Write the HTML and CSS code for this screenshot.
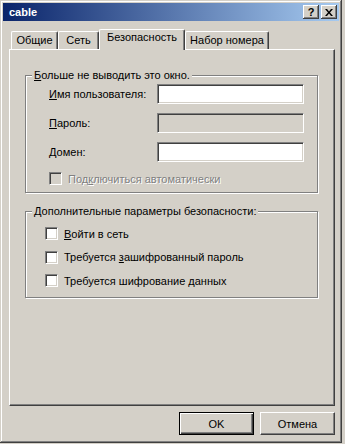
FILE: index.html
```html
<!DOCTYPE html>
<html lang="ru">
<head>
    <meta charset="UTF-8">
    <title>cable</title>
    <link rel="stylesheet" href="styles.css">
</head>
<body>
<div class="window">
    <div class="titlebar">
        <span class="title">cable</span>
        <button type="button" class="caption-btn">?</button>
        <button type="button" class="caption-btn">
            <svg width="8" height="7" viewBox="0 0 8 7"><path d="M0 0h2l2 2.5L6 0h2L5 3.5 8 7H6L4 4.5 2 7H0l3-3.5z" fill="#000"/></svg>
        </button>
    </div>

    <div class="tabs">
        <div class="tab" style="width:47px">Общие</div>
        <div class="tab" style="width:41px">Сеть</div>
        <div class="tab active" style="width:86px">Безопасность</div>
        <div class="tab" style="width:84px">Набор номера</div>
    </div>

    <div class="panel">
        <fieldset class="group">
            <legend><u>Б</u>ольше не выводить это окно.</legend>
            <div class="group-body login">
                <div class="fields">
                    <label for="user"><u>И</u>мя пользователя:</label>
                    <input type="text" id="user">
                    <label for="pass"><u>П</u>ароль:</label>
                    <input type="password" id="pass" disabled>
                    <label for="domain"><u>Д</u>омен:</label>
                    <input type="text" id="domain">
                </div>
                <label class="check disabled"><input type="checkbox" disabled><span>Под<u>к</u>лючиться автоматически</span></label>
            </div>
        </fieldset>

        <fieldset class="group second">
            <legend>Дополнительные параметры безопасности:</legend>
            <div class="group-body options">
                <label class="check"><input type="checkbox"><span><u>В</u>ойти в сеть</span></label>
                <label class="check"><input type="checkbox"><span>Требуется <u>з</u>ашифрованный пароль</span></label>
                <label class="check"><input type="checkbox"><span>Требуется шифрование <u>д</u>анных</span></label>
            </div>
        </fieldset>
    </div>

    <div class="actions">
        <button type="button" class="btn default">OK</button>
        <button type="button" class="btn">Отмена</button>
    </div>
</div>
</body>
</html>
```

FILE: styles.css
```css
body {
    margin: 0;
    background: #d4d0c8;
    font-family: "Liberation Sans", Arial, sans-serif;
    font-size: 11px;
    color: #000;
}

.window {
    width: 342px;
    height: 443px;
    box-sizing: border-box;
    padding: 3px;
    background: #d4d0c8;
    box-shadow: inset -1px -1px #404040, inset 1px 1px #d4d0c8, inset -2px -2px #808080, inset 2px 2px #fff;
}

.titlebar {
    height: 18px;
    display: flex;
    align-items: center;
    padding: 0 2px 0 6px;
    background: linear-gradient(to right, #0a246a, #a6caf0);
    color: #fff;
    font-weight: bold;
}

.title {
    flex: 1;
}

.caption-btn {
    width: 16px;
    height: 14px;
    margin: 0 0 0 2px;
    padding: 0;
    box-sizing: border-box;
    border: none;
    background: #d4d0c8;
    box-shadow: inset -1px -1px #404040, inset 1px 1px #fff, inset -2px -2px #808080;
    font: bold 11px "Liberation Sans", Arial, sans-serif;
    line-height: 12px;
    color: #000;
    display: flex;
    align-items: center;
    justify-content: center;
}

.tabs {
    display: flex;
    align-items: flex-end;
    height: 20px;
    margin: 8px 0 0 8px;
    position: relative;
    z-index: 1;
}

.tab {
    height: 18px;
    box-sizing: border-box;
    border: 1px solid #fff;
    border-bottom: none;
    border-right-color: #404040;
    border-radius: 2px 2px 0 0;
    box-shadow: inset -1px 0 #808080;
    padding-top: 1px;
    line-height: 14px;
    text-align: center;
    white-space: nowrap;
}

.tab.active {
    height: 21px;
    margin-bottom: -1px;
    padding-top: 0;
    background: #d4d0c8;
}

.panel {
    width: 326px;
    height: 357px;
    margin-left: 6px;
    box-sizing: border-box;
    border: 1px solid;
    border-color: #fff #404040 #404040 #fff;
    box-shadow: inset -1px -1px #808080;
    padding: 19px 0 0 15px;
}

.group {
    width: 293px;
    margin: 0;
    padding: 0;
    box-sizing: border-box;
    border: 1px solid #808080;
    box-shadow: inset 1px 1px #fff, 1px 1px #fff;
}

.group legend {
    margin-left: 6px;
    padding: 0 2px;
    line-height: 13px;
    background: #d4d0c8;
}

.group.second {
    margin-top: 12px;
}

.login {
    padding: 2px 0 7px 23px;
}

.fields {
    display: grid;
    grid-template-columns: 108px 147px;
    row-gap: 9px;
    align-items: center;
}

.fields input {
    width: 147px;
    height: 20px;
    margin: 0;
    padding: 0 3px;
    box-sizing: border-box;
    border: 1px solid;
    border-color: #808080 #fff #fff #808080;
    box-shadow: inset 1px 1px #404040, inset -1px -1px #d4d0c8;
    background: #fff;
    font: inherit;
    outline: none;
}

.fields input:disabled {
    background: #d4d0c8;
}

.check {
    display: flex;
    align-items: center;
    gap: 6px;
    height: 13px;
    white-space: nowrap;
}

.check input {
    appearance: none;
    width: 13px;
    height: 13px;
    margin: 0;
    box-sizing: border-box;
    border: 1px solid;
    border-color: #808080 #fff #fff #808080;
    box-shadow: inset 1px 1px #404040, inset -1px -1px #d4d0c8;
    background: #fff;
}

.check.disabled {
    margin-top: 10px;
    color: #808080;
    text-shadow: 1px 1px #fff;
}

.check input:disabled {
    background: #d4d0c8;
}

.options {
    display: flex;
    flex-direction: column;
    gap: 10.5px;
    padding: 9px 0 10px 19px;
}

.actions {
    display: flex;
    justify-content: flex-end;
    gap: 6px;
    width: 326px;
    margin: 6px 0 0 6px;
}

.btn {
    width: 75px;
    height: 23px;
    margin: 0;
    padding: 0;
    box-sizing: border-box;
    border: 1px solid;
    border-color: #fff #404040 #404040 #fff;
    box-shadow: inset -1px -1px #808080;
    background: #d4d0c8;
    font: inherit;
    color: #000;
}

.btn.default {
    border-color: #000;
    box-shadow: inset 1px 1px #fff, inset -1px -1px #404040, inset -2px -2px #808080;
}
```
